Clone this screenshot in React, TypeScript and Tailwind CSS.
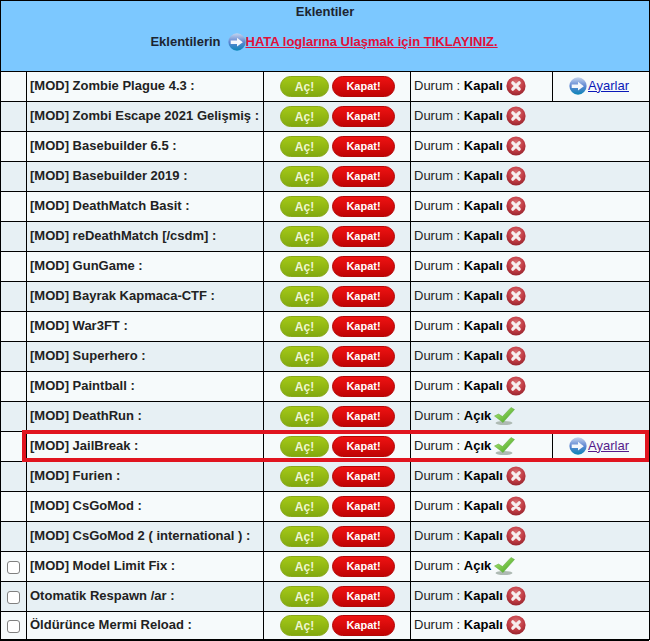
import { useId } from "react";

type Row = {
  name: string;
  open: boolean;
  settings?: boolean;
  check?: boolean;
  visited?: boolean;
};

const rows: Row[] = [
  { name: "[MOD] Zombie Plague 4.3 :", open: false, settings: true },
  { name: "[MOD] Zombi Escape 2021 Gelişmiş :", open: false },
  { name: "[MOD] Basebuilder 6.5 :", open: false },
  { name: "[MOD] Basebuilder 2019 :", open: false },
  { name: "[MOD] DeathMatch Basit :", open: false },
  { name: "[MOD] reDeathMatch [/csdm] :", open: false },
  { name: "[MOD] GunGame :", open: false },
  { name: "[MOD] Bayrak Kapmaca-CTF :", open: false },
  { name: "[MOD] War3FT :", open: false },
  { name: "[MOD] Superhero :", open: false },
  { name: "[MOD] Paintball :", open: false },
  { name: "[MOD] DeathRun :", open: true },
  { name: "[MOD] JailBreak :", open: true, settings: true, visited: true },
  { name: "[MOD] Furien :", open: false },
  { name: "[MOD] CsGoMod :", open: false },
  { name: "[MOD] CsGoMod 2 ( international ) :", open: false },
  { name: "[MOD] Model Limit Fix :", open: true, check: true },
  { name: "Otomatik Respawn /ar :", open: false, check: true },
  { name: "Öldürünce Mermi Reload :", open: false, check: true },
];

function ArrowIcon() {
  const id = useId();
  return (
    <svg width="18" height="18" viewBox="0 0 20 20" className="shrink-0">
      <defs>
        <linearGradient id={id} x1="0" y1="0" x2="0" y2="1">
          <stop offset="0" stopColor="#c4d4ee" />
          <stop offset="0.5" stopColor="#5f86d2" />
          <stop offset="1" stopColor="#0a86b8" />
        </linearGradient>
      </defs>
      <circle cx="10" cy="10" r="9.6" fill={`url(#${id})`} />
      <path d="M3 8.4 H10 V5.2 L16.5 10.3 L10 15 V12.2 H3 Z" fill="#f4f7fc" />
    </svg>
  );
}

function CrossIcon() {
  const id = useId();
  return (
    <svg width="20" height="20" viewBox="0 0 20 20" className="shrink-0">
      <defs>
        <radialGradient id={id} cx="0.5" cy="0.35" r="0.7">
          <stop offset="0" stopColor="#dd7478" />
          <stop offset="0.6" stopColor="#bf3a42" />
          <stop offset="1" stopColor="#8e2029" />
        </radialGradient>
      </defs>
      <circle cx="10" cy="10" r="9.6" fill={`url(#${id})`} />
      <path d="M6.8 6.8 L13.2 13.2 M13.2 6.8 L6.8 13.2" stroke="#f6eeee" strokeWidth="3.2" strokeLinecap="round" />
    </svg>
  );
}

function CheckIcon() {
  const id = useId();
  return (
    <svg width="21" height="20" viewBox="0 0 21 20" className="shrink-0">
      <defs>
        <linearGradient id={id} x1="0" y1="0" x2="1" y2="1">
          <stop offset="0" stopColor="#b4ec78" />
          <stop offset="1" stopColor="#3f9e1e" />
        </linearGradient>
      </defs>
      <ellipse cx="10" cy="17" rx="8.5" ry="2" fill="#aebab3" />
      <path d="M0.5 10 L4.5 8 L8.5 10.5 L17 1.5 L20.5 3.5 L9 16.5 Z" fill={`url(#${id})`} stroke="#5aa838" strokeWidth="0.5" />
    </svg>
  );
}

function Buttons() {
  return (
    <div className="flex items-center gap-[3px] pl-[16px]">
      <span className="flex h-[21px] w-[49px] items-center justify-center rounded-full border border-[#8aa81a] bg-gradient-to-b from-[#a4c817] to-[#82a90f] text-[12px] font-bold text-[#eef5cf]">
        Aç!
      </span>
      <span className="flex h-[21px] w-[63px] items-center justify-center rounded-full border border-[#b30505] bg-gradient-to-b from-[#ee1212] to-[#c00404] text-[11px] font-bold text-white">
        Kapat!
      </span>
    </div>
  );
}

export default function App() {
  return (
    <div className="relative w-[649px] border-b border-black font-['Liberation_Sans',Arial,sans-serif] text-[13px] text-[#222]">
      <table className="w-[649px] table-fixed border-collapse">
        <colgroup>
          <col className="w-[26px]" />
          <col className="w-[237px]" />
          <col className="w-[147px]" />
          <col className="w-[142px]" />
          <col className="w-[97px]" />
        </colgroup>
        <thead>
          <tr>
            <th colSpan={5} className="h-[71px] border border-black bg-[#7cc8ff] p-0 align-top font-bold">
              <div className="pt-[3px] leading-[16px] text-[#1c2430]">Eklentiler</div>
              <div className="mt-[13px] flex items-center justify-center pr-[2px] leading-[18px]">
                <span className="mr-[7px] text-[#1c2430]">Eklentilerin</span>
                <ArrowIcon />
                <a href="#" className="text-[#e0103a] underline">
                  HATA loglarına Ulaşmak için TIKLAYINIZ.
                </a>
              </div>
            </th>
          </tr>
        </thead>
        <tbody>
          {rows.map((row, i) => (
            <tr
              key={row.name}
              className={`${i === rows.length - 1 ? "h-[28px]" : "h-[30px]"} ${i % 2 === 0 ? "bg-[#f6fafb]" : "bg-[#e7f0f4]"}`}
            >
              <td className="border border-black p-0 text-center">
                {row.check && (
                  <input type="checkbox" className="h-[13px] w-[13px] appearance-none rounded-[3px] border border-[#808080] bg-white align-middle" />
                )}
              </td>
              <td className="border border-black pt-0 pb-[2px] pl-[3px] pr-0 font-bold whitespace-nowrap">{row.name}</td>
              <td className="border border-black p-0">
                <Buttons />
              </td>
              <td colSpan={row.settings ? 1 : 2} className="border border-black pt-0 pb-[2px] pl-[3px] pr-0">
                <div className="flex items-center">
                  <span className="whitespace-pre">Durum : </span>
                  <b className="mr-[3px] text-black">{row.open ? "Açık" : "Kapalı"}</b>
                  {row.open ? <CheckIcon /> : <CrossIcon />}
                </div>
              </td>
              {row.settings && (
                <td className="border border-black pt-0 pb-[2px] pl-0 pr-[4px]">
                  <div className="flex items-center justify-center gap-[1px]">
                    <ArrowIcon />
                    <a href="#" className={row.visited ? "text-[#551a8b] underline" : "text-[#0b19b8] underline"}>
                      Ayarlar
                    </a>
                  </div>
                </td>
              )}
            </tr>
          ))}
        </tbody>
      </table>
      <div className="pointer-events-none absolute left-[22px] top-[430px] h-[32px] w-[627px] border-[4px] border-[#e0141f]" />
    </div>
  );
}
